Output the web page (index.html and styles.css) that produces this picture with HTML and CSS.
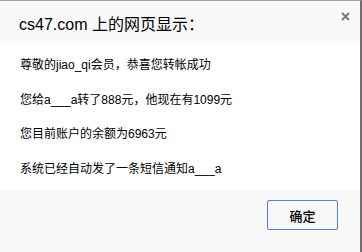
FILE: index.html
```html
<!DOCTYPE html>
<html>
<head>
<meta charset="utf-8">
<link rel="stylesheet" href="styles.css">
</head>
<body>
<div class="dialog">
  <div class="header">
    <div class="title">cs47.com 上的网页显示：</div>
    <svg class="close" width="9" height="9" viewBox="0 0 9 9"><path d="M1 1L8 8M8 1L1 8" stroke="#7a7a7a" stroke-width="2"/></svg>
  </div>
  <div class="content">
    <p>尊敬的jiao_qi会员，恭喜您转帐成功</p>
    <p>您给a___a转了888元，他现在有1099元</p>
    <p>您目前账户的余额为6963元</p>
    <p>系统已经自动发了一条短信通知a___a</p>
  </div>
  <div class="footer">
    <button class="ok">确定</button>
  </div>
</div>
</body>
</html>
```
FILE: styles.css
```css
html, body {
  margin: 0;
  padding: 0;
  background: #ffffff;
}
.dialog {
  width: 362px;
  height: 252px;
  box-sizing: border-box;
  border-top: 1px solid #a0a0a0;
  border-right: 2px solid #6f6f6f;
  display: flex;
  flex-direction: column;
  font-family: "Liberation Sans", "Noto Sans CJK SC", sans-serif;
  color: #000;
}
.header {
  height: 43px;
  background: #f9f9f9;
  display: flex;
  justify-content: space-between;
  align-items: flex-start;
  padding: 0 10px 0 19px;
}
.title {
  font-size: 16px;
  line-height: 16px;
  margin-top: 16px;
}
.close {
  margin-top: 11px;
}
.content {
  height: 146px;
  background: #ffffff;
  padding: 13px 0 0 20px;
  box-sizing: border-box;
}
.content p {
  margin: 0 0 18.5px 0;
  font-size: 12px;
  line-height: 16px;
  height: 16px;
}
.footer {
  flex: 1;
  background: #f9f9f9;
  display: flex;
  justify-content: flex-end;
  align-items: flex-start;
  padding: 10px 22px 0 0;
}
.ok {
  width: 71px;
  height: 30px;
  border: 1px solid #4a7fe6;
  border-radius: 2px;
  background: #f7f7f7;
  font-family: "Noto Sans CJK SC", sans-serif;
  font-size: 13px;
  font-weight: 500;
  color: #000;
  padding: 0;
}
```
